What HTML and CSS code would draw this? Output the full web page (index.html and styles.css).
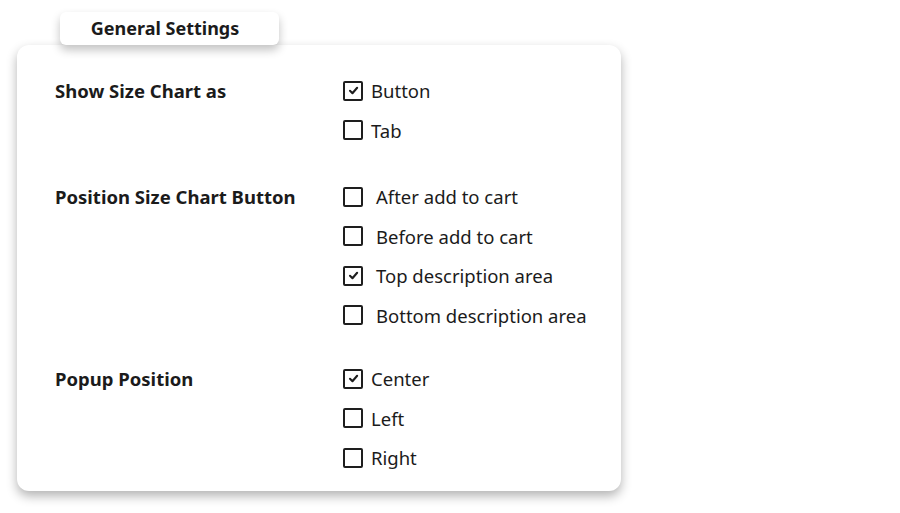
FILE: index.html
```html
<!DOCTYPE html>
<html>
<head>
<meta charset="utf-8">
<link rel="stylesheet" href="styles.css">
</head>
<body>
<div class="wrap">
  <div class="tab">General Settings</div>
  <div class="card">
    <div class="group">
      <div class="label">Show Size Chart as</div>
      <div class="options">
        <div class="opt"><span class="box checked"><svg viewBox="0 0 10 10"><path d="M2.3 5.2 L4.2 7.1 L7.8 2.9"/></svg></span><span class="txt">Button</span></div>
        <div class="opt"><span class="box"></span><span class="txt">Tab</span></div>
      </div>
    </div>
    <div class="group wide">
      <div class="label">Position Size Chart Button</div>
      <div class="options">
        <div class="opt"><span class="box"></span><span class="txt">After add to cart</span></div>
        <div class="opt"><span class="box"></span><span class="txt">Before add to cart</span></div>
        <div class="opt"><span class="box checked"><svg viewBox="0 0 10 10"><path d="M2.3 5.2 L4.2 7.1 L7.8 2.9"/></svg></span><span class="txt">Top description area</span></div>
        <div class="opt"><span class="box"></span><span class="txt">Bottom description area</span></div>
      </div>
    </div>
    <div class="group last">
      <div class="label">Popup Position</div>
      <div class="options">
        <div class="opt"><span class="box checked"><svg viewBox="0 0 10 10"><path d="M2.3 5.2 L4.2 7.1 L7.8 2.9"/></svg></span><span class="txt">Center</span></div>
        <div class="opt"><span class="box"></span><span class="txt">Left</span></div>
        <div class="opt"><span class="box"></span><span class="txt">Right</span></div>
      </div>
    </div>
  </div>
</div>
</body>
</html>
```
FILE: styles.css
```css
html, body {
  margin: 0;
  padding: 0;
  background: #ffffff;
}
body {
  font-family: "Noto Sans", "Open Sans", sans-serif;
  color: #1b1b1b;
  width: 900px;
  height: 513px;
  overflow: hidden;
}
.wrap {
  padding-top: 12px;
  padding-left: 17px;
}
.tab {
  position: relative;
  z-index: 1;
  margin-left: 43px;
  width: 219px;
  height: 33px;
  box-sizing: border-box;
  background: #fff;
  border-radius: 6px;
  box-shadow: 0 5px 10px rgba(0, 0, 0, 0.24);
  font-weight: 700;
  font-size: 18px;
  display: flex;
  align-items: center;
  justify-content: center;
  padding: 0 9px 2px 0;
}
.card {
  width: 604px;
  height: 446px;
  box-sizing: border-box;
  background: #fff;
  border-radius: 12px;
  box-shadow: 0 5px 11px rgba(0, 0, 0, 0.3);
  padding: 26px 0 0 38px;
  display: flex;
  flex-direction: column;
  gap: 27px;
}
.group.last {
  margin-top: -3px;
}
.group {
  display: grid;
  grid-template-columns: 288px 1fr;
}
.label {
  font-weight: 700;
  font-size: 18.5px;
  height: 39.5px;
  display: flex;
  align-items: center;
  box-sizing: border-box;
}
.options {
  display: flex;
  flex-direction: column;
}
.opt {
  height: 39.5px;
  display: flex;
  align-items: center;
  gap: 8px;
}
.wide .opt {
  gap: 13px;
}
.box {
  width: 20px;
  height: 20px;
  box-sizing: border-box;
  border: 2px solid #1e1e1e;
  border-radius: 2px;
  display: flex;
  align-items: center;
  justify-content: center;
  flex: none;
}
.box svg {
  width: 13px;
  height: 13px;
  fill: none;
  stroke: #1e1e1e;
  stroke-width: 1.6;
  stroke-linecap: round;
  stroke-linejoin: round;
}
.txt {
  font-size: 18.5px;
}
```
